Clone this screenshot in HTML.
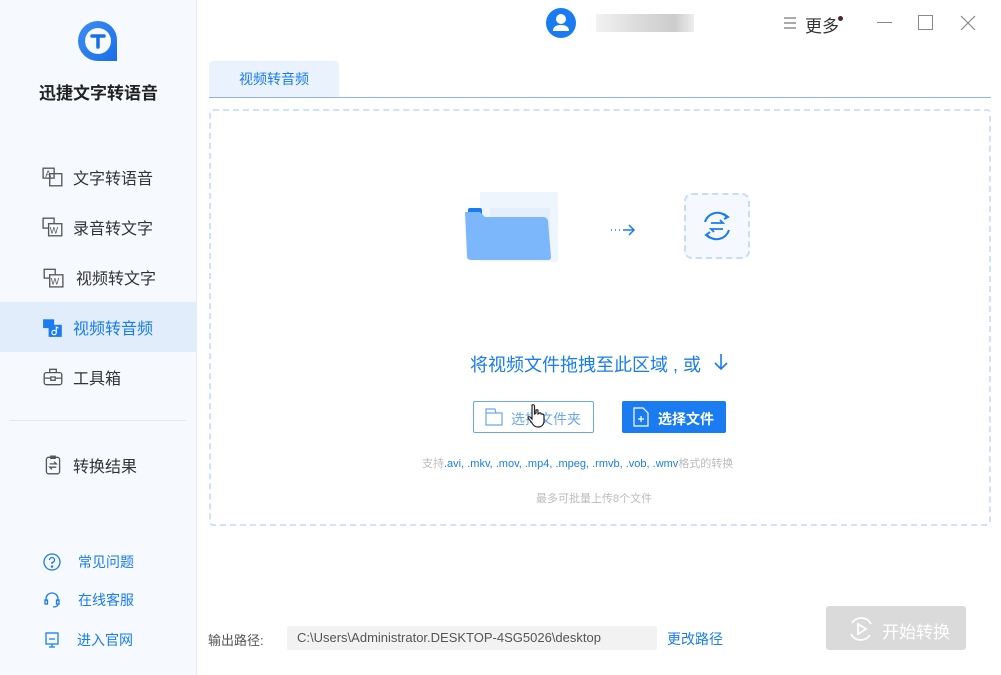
<!DOCTYPE html>
<html><head><meta charset="utf-8"><style>
*{margin:0;padding:0;box-sizing:border-box}
body{width:1001px;height:675px;overflow:hidden;background:#fff;font-family:"Liberation Sans","Noto Sans CJK SC",sans-serif;position:relative;color:#333}
.side{position:absolute;left:0;top:0;width:197px;height:675px;background:#f6f9fe;border-right:1px solid #e6ecf5}
.abs{position:absolute}
.nav{position:absolute;left:0;width:197px;height:50px;display:flex;align-items:center;font-size:16px;color:#333}
.nav svg{position:absolute;left:42px}
.nav span{position:absolute;left:73px}
.bot{position:absolute;left:0;font-size:14px;color:#1a7cf0;display:flex;align-items:center}
.bot span{position:absolute;left:78px;white-space:nowrap}
</style></head><body>
<div class="side">
 <svg class="abs" style="left:75px;top:18px" width="46" height="46" viewBox="0 0 46 46">
  <defs><linearGradient id="g" x1="0" y1="0" x2="1" y2="1"><stop offset="0" stop-color="#3d8df5"/><stop offset="1" stop-color="#1a6fe8"/></linearGradient></defs>
  <path d="M23 3 A20 20 0 1 0 23 43 L42 43 L42 23 A19 19 0 0 0 23 3Z" fill="url(#g)"/>
  <circle cx="23" cy="23" r="13" fill="#f6f9fe"/>
  <path d="M17 18 H29 M23 18 V29" stroke="#1a6fe8" stroke-width="3.5" stroke-linecap="round"/>
 </svg>
 <div class="abs" style="left:0;width:197px;top:79px;text-align:center;font-size:17px;font-weight:bold;color:#222">迅捷文字转语音</div>
 <div class="nav" style="top:152px"><svg width="22" height="22" viewBox="0 0 20 20" fill="none" stroke="#555" stroke-width="1.2"><rect x="1" y="2" width="10" height="9"/><rect x="7" y="7" width="11" height="11"/><text x="3" y="10" font-size="8" fill="#555" stroke="none">A</text></svg><span>文字转语音</span></div>
 <div class="nav" style="top:202px"><svg width="22" height="22" viewBox="0 0 20 20" fill="none" stroke="#555" stroke-width="1.2"><rect x="1" y="2" width="10" height="9"/><rect x="6" y="7" width="12" height="11" fill="#f6f9fe"/><text x="7" y="16" font-size="8" fill="#555" stroke="none">W</text></svg><span>录音转文字</span></div>
 <div class="nav" style="top:252px"><svg width="22" height="22" viewBox="0 0 20 20" fill="none" stroke="#555" stroke-width="1.2"><rect x="2" y="3" width="10" height="8"/><rect x="7" y="8" width="12" height="11" fill="#f6f9fe"/><text x="8" y="17" font-size="8" fill="#555" stroke="none">W</text></svg><span style="left:76px">视频转文字</span></div>
 <div class="nav" style="top:302px;background:#e1edfa;color:#1a7cf0"><svg width="22" height="22" viewBox="0 0 20 20"><rect x="1" y="3" width="10" height="8" fill="#1a7cf0"/><rect x="6" y="8" width="12" height="11" fill="#1a7cf0"/><circle cx="11" cy="15" r="2" fill="none" stroke="#fff"/><path d="M13 15 V10 L15 11" stroke="#fff" fill="none"/></svg><span>视频转音频</span></div>
 <div class="nav" style="top:352px"><svg width="22" height="22" viewBox="0 0 20 20" fill="none" stroke="#555" stroke-width="1.2"><rect x="2" y="6" width="16" height="11" rx="2"/><path d="M7 6 V3 H13 V6 M2 11 H18"/><rect x="8" y="10" width="4" height="3" fill="#f6f9fe"/></svg><span>工具箱</span></div>
 <div class="abs" style="left:10px;top:420px;width:176px;height:1px;background:#e2e8f0"></div>
 <div class="nav" style="top:440px"><svg width="22" height="22" viewBox="0 0 20 20" fill="none" stroke="#555" stroke-width="1.2"><rect x="4" y="3" width="12" height="15" rx="2"/><path d="M8 2 H12 V4 H8Z M7 9 H13 L11 7 M13 12 H7 L9 14"/></svg><span>转换结果</span></div>
 <div class="bot" style="top:552px;height:20px"><svg class="abs" style="left:42px" width="20" height="20" viewBox="0 0 20 20" fill="none" stroke="#1a7cf0" stroke-width="1.3"><circle cx="10" cy="10" r="8"/><path d="M7.5 8 A2.5 2.5 0 1 1 10 10.5 V12"/><circle cx="10" cy="14.5" r=".6" fill="#1a7cf0"/></svg><span>常见问题</span></div>
 <div class="bot" style="top:590px;height:20px"><svg class="abs" style="left:42px" width="20" height="20" viewBox="0 0 20 20" fill="none" stroke="#1a7cf0" stroke-width="1.3"><path d="M4 11 V9 A6 6 0 0 1 16 9 V11"/><rect x="3" y="10" width="2.5" height="4"/><rect x="14.5" y="10" width="2.5" height="4"/><path d="M16 14 Q16 17 11 17"/></svg><span>在线客服</span></div>
 <div class="bot" style="top:630px;height:20px"><svg class="abs" style="left:42px" width="20" height="20" viewBox="0 0 20 20" fill="none" stroke="#1a7cf0" stroke-width="1.3"><rect x="4" y="3" width="12" height="11"/><path d="M7 9 H13 M10 14 V17 M7 17 H13"/></svg><span style="left:77px">进入官网</span></div>
</div>

<svg class="abs" style="left:546px;top:8px" width="30" height="30" viewBox="0 0 30 30"><circle cx="15" cy="15" r="15" fill="#1a7cf0"/><circle cx="15" cy="11" r="5" fill="#fff"/><path d="M7 23 Q7 17 15 17 Q23 17 23 23Z" fill="#fff"/></svg>
<div class="abs" style="left:596px;top:14px;width:98px;height:18px;background:linear-gradient(90deg,#f2f2f2,#ddd 40%,#ccc 80%,#eee)"></div>
<svg class="abs" style="left:782px;top:15px" width="16" height="16" viewBox="0 0 16 16" stroke="#777" stroke-width="1.3"><path d="M2 3H14M2 8H14M2 13H14"/></svg>
<div class="abs" style="left:805px;top:12px;font-size:17px;color:#333">更多</div>
<div class="abs" style="left:838px;top:16px;width:5px;height:5px;border-radius:50%;background:#4a2a2a"></div>
<div class="abs" style="left:877px;top:22px;width:15px;height:1px;background:#888"></div>
<div class="abs" style="left:918px;top:15px;width:15px;height:15px;border:1.3px solid #888"></div>
<svg class="abs" style="left:960px;top:15px" width="16" height="16" viewBox="0 0 16 16" stroke="#888" stroke-width="1.2"><path d="M1 1L15 15M15 1L1 15"/></svg>

<div class="abs" style="left:209px;top:61px;width:130px;height:36px;background:#eaf2fd;border-radius:4px 4px 0 0;text-align:center;line-height:36px;font-size:14px;color:#1a7cf0">视频转音频</div>
<div class="abs" style="left:209px;top:97px;width:782px;height:1px;background:#8fb5e6"></div>

<div class="abs" style="left:209px;top:109px;width:782px;height:417px;border:2px dashed #cfe2f8;border-radius:4px"></div>
<div class="abs" style="left:480px;top:192px;width:78px;height:70px;background:#eef5fd"></div>
<div class="abs" style="left:490px;top:208px;width:60px;height:50px;background:#e5effc"></div>
<svg class="abs" style="left:463px;top:208px" width="90" height="54" viewBox="0 0 90 54"><rect x="5" y="0" width="14" height="8" rx="2" fill="#1a7cf0"/><path d="M2 4 H17 L22 9 H80 Q84 9 85 13 L88 49 Q88 52 85 52 H8 Q4 52 4 48 Z" fill="#7db7fb"/></svg>
<svg class="abs" style="left:609px;top:222px" width="28" height="16" viewBox="0 0 28 16" stroke="#1a7cf0" stroke-width="1.5" fill="none"><path d="M2 8h1M6 8h1M10 8h1M14 8H25M20 3L25 8L20 13"/></svg>
<div class="abs" style="left:684px;top:193px;width:66px;height:66px;border:2px dashed #c7ddf7;border-radius:8px;background:#f5f8fc"></div>
<svg class="abs" style="left:700px;top:209px" width="34" height="34" viewBox="0 0 34 34" fill="none" stroke="#1a7cf0" stroke-width="2"><path d="M5 13 A13 13 0 0 1 27 8 M29 21 A13 13 0 0 1 7 26"/><path d="M24 5 L28 8 L24 10 M10 29 L6 26 L10 23"/><path d="M11 14 H23 L20 11 M23 20 H11 L14 23" stroke-width="1.8"/></svg>
<div class="abs" style="left:470px;top:351px;font-size:18px;color:#1a7cf0;white-space:nowrap">将视频文件拖拽至此区域 , 或</div>
<svg class="abs" style="left:713px;top:353px" width="16" height="18" viewBox="0 0 16 18" stroke="#1a7cf0" stroke-width="1.6" fill="none"><path d="M8 1V16M2 10L8 16L14 10"/></svg>
<div class="abs" style="left:473px;top:401px;width:121px;height:32px;border:1px solid #6aa7ee;border-radius:2px"></div>
<svg class="abs" style="left:485px;top:408px" width="18" height="18" viewBox="0 0 18 18" fill="none" stroke="#6aa7ee" stroke-width="1.2"><path d="M1 1H10L11 5H17V17H1Z M1 5H11"/></svg>
<div class="abs" style="left:511px;top:409px;font-size:14px;color:#6aa7ee">选择文件夹</div>
<svg class="abs" style="left:526px;top:403px" width="20" height="26" viewBox="0 0 20 26"><path d="M6 2 Q8 1 8.5 3 V11 L10 10 V7 Q12 6 12 8 V11 L13.5 10 Q15 9.5 15 11 L16 11 Q18 11 18 13 V19 Q17 24 12 24 Q8 24 6 20 L2 15 Q2 13 4 14 L6 16 V3Z" fill="#fff" stroke="#222" stroke-width="1.2"/></svg>
<div class="abs" style="left:622px;top:401px;width:104px;height:32px;background:#1a7cf0;border-radius:2px"></div>
<svg class="abs" style="left:633px;top:407px" width="16" height="20" viewBox="0 0 16 20" fill="none" stroke="#fff" stroke-width="1.2"><path d="M1 1H10L15 6V19H1Z M5 12H11M8 9V15"/></svg>
<div class="abs" style="left:658px;top:409px;font-size:14px;color:#fff;font-weight:bold">选择文件</div>
<div class="abs" style="left:422px;top:455px;font-size:11px;color:#bbb;white-space:nowrap">支持<span style="color:#1a7cf0">.avi, .mkv, .mov, .mp4, .mpeg, .rmvb, .vob, .wmv</span>格式的转换</div>
<div class="abs" style="left:536px;top:490px;font-size:11px;color:#bbb">最多可批量上传8个文件</div>

<div class="abs" style="left:208px;top:630px;font-size:13px;color:#555">输出路径:</div>
<div class="abs" style="left:287px;top:626px;width:370px;height:24px;background:#f2f2f2;border-radius:2px;font-size:13px;color:#555;line-height:24px;padding-left:10px;white-space:nowrap">C:\Users\Administrator.DESKTOP-4SG5026\desktop</div>
<div class="abs" style="left:667px;top:629px;font-size:14px;color:#1a7cf0">更改路径</div>
<div class="abs" style="left:826px;top:606px;width:140px;height:44px;background:#dadada;border-radius:3px"></div>
<svg class="abs" style="left:847px;top:615px" width="28" height="28" viewBox="0 0 28 28" fill="none" stroke="#fff" stroke-width="1.8"><path d="M24 9 A11 11 0 0 0 5 8 M4 19 A11 11 0 0 0 23 20"/><path d="M11 9 L19 14 L11 19Z"/></svg>
<div class="abs" style="left:882px;top:618px;font-size:17px;color:#fff">开始转换</div>
</body></html>
